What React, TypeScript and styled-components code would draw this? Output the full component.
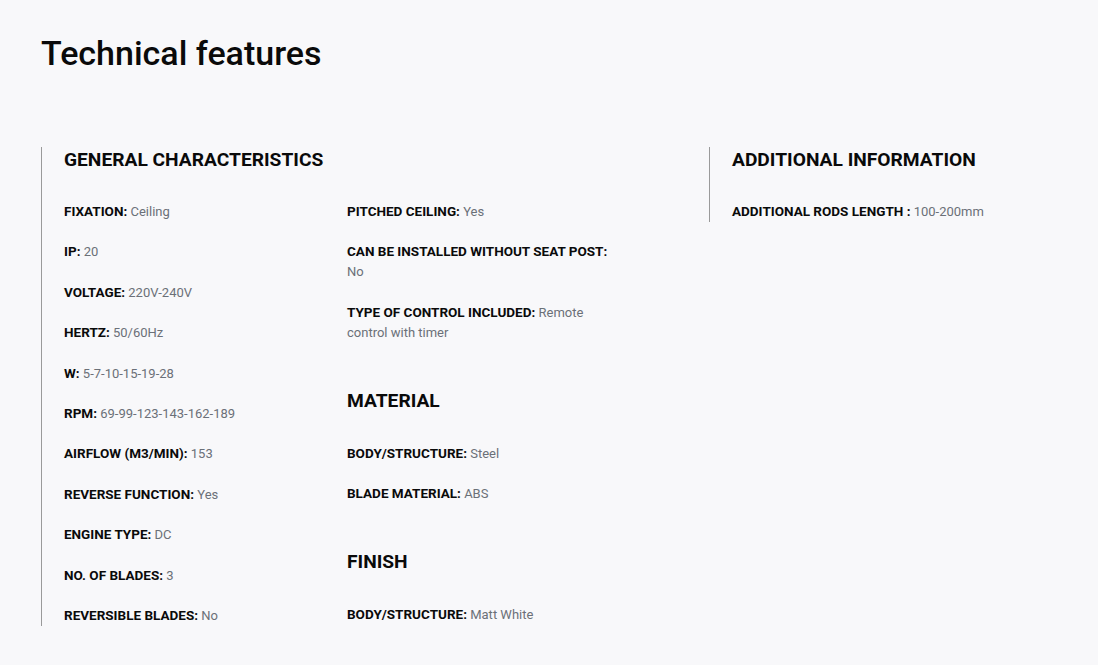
import React from "react";
import styled, { createGlobalStyle } from "styled-components";

const GlobalStyle = createGlobalStyle`
  html, body { margin: 0; padding: 0; background: #f8f8fa; }
  body { font-family: Roboto, "Liberation Sans", Arial, sans-serif; color: #111; }
  * { box-sizing: border-box; }
`;

const Page = styled.div`
  padding: 32px 41px 0 41px;
  width: 1098px;
  height: 665px;
  overflow: hidden;
`;

const Title = styled.h1`
  margin: 0;
  font-size: 34px;
  line-height: 42px;
  font-weight: 500;
  color: #0a0a0a;
`;

const Layout = styled.div`
  display: grid;
  grid-template-columns: 668px 1fr;
  margin-top: 73px;
  align-items: start;
`;

const Panel = styled.section`
  border-left: 1px solid #9a9a9a;
  padding-left: 22px;
`;

const Columns = styled.div`
  display: grid;
  grid-template-columns: 263px 270px;
  column-gap: 20px;
`;

const Column = styled.div`
  display: flex;
  flex-direction: column;
`;

const Heading = styled.h2<{ $spaced?: boolean }>`
  margin: ${(p) => (p.$spaced ? "45px" : "0")} 0 ${(p) => (p.$spaced ? "32px" : "31px")} 0;
  padding-top: 2px;
  font-size: 19.2px;
  line-height: 22px;
  font-weight: 700;
  color: #0a0a0a;
`;

const Item = styled.p`
  margin: 0 0 20.4px 0;
  font-size: 13px;
  line-height: 20px;
  &:last-child { margin-bottom: 0; }
`;

const Label = styled.strong`
  font-size: 13.5px;
  line-height: 1;
  font-weight: 700;
  color: #0a0a0a;
`;

const Value = styled.span`
  color: #6b7078;
  font-weight: 400;
`;

type Spec = [string, string];

const general1: Spec[] = [
  ["FIXATION:", "Ceiling"],
  ["IP:", "20"],
  ["VOLTAGE:", "220V-240V"],
  ["HERTZ:", "50/60Hz"],
  ["W:", "5-7-10-15-19-28"],
  ["RPM:", "69-99-123-143-162-189"],
  ["AIRFLOW (M3/MIN):", "153"],
  ["REVERSE FUNCTION:", "Yes"],
  ["ENGINE TYPE:", "DC"],
  ["NO. OF BLADES:", "3"],
  ["REVERSIBLE BLADES:", "No"],
];

const general2: Spec[] = [
  ["PITCHED CEILING:", "Yes"],
  ["CAN BE INSTALLED WITHOUT SEAT POST:", "No"],
  ["TYPE OF CONTROL INCLUDED:", "Remote control with timer"],
];

const material: Spec[] = [
  ["BODY/STRUCTURE:", "Steel"],
  ["BLADE MATERIAL:", "ABS"],
];

const finish: Spec[] = [["BODY/STRUCTURE:", "Matt White"]];

const SpecList = ({ items }: { items: Spec[] }) => (
  <>
    {items.map(([l, v], i) => (
      <Item key={i}>
        <Label>{l}</Label> <Value>{v}</Value>
      </Item>
    ))}
  </>
);

const Group = styled.div`
  display: flex;
  flex-direction: column;
`;

export default function App() {
  return (
    <>
      <GlobalStyle />
      <Page>
        <Title>Technical features</Title>
        <Layout>
          <Panel>
            <Heading>GENERAL CHARACTERISTICS</Heading>
            <Columns>
              <Column>
                <SpecList items={general1} />
              </Column>
              <Column>
                <Group>
                  <SpecList items={general2} />
                </Group>
                <Heading $spaced>MATERIAL</Heading>
                <Group>
                  <SpecList items={material} />
                </Group>
                <Heading $spaced>FINISH</Heading>
                <Group>
                  <SpecList items={finish} />
                </Group>
              </Column>
            </Columns>
          </Panel>
          <Panel>
            <Heading>ADDITIONAL INFORMATION</Heading>
            <Item>
              <Label>ADDITIONAL RODS LENGTH :</Label> <Value>100-200mm</Value>
            </Item>
          </Panel>
        </Layout>
      </Page>
    </>
  );
}
